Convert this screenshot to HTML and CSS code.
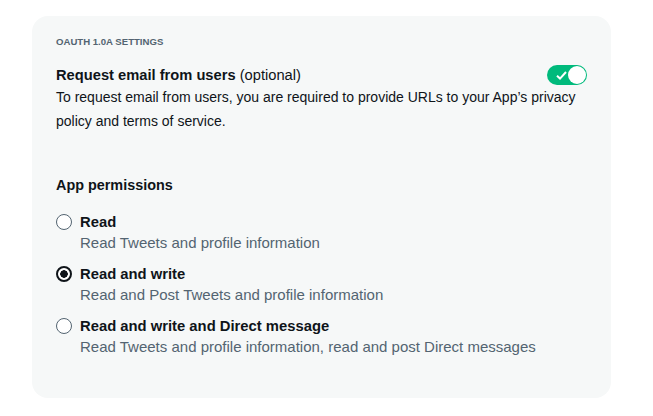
FILE: index.html
```html
<!DOCTYPE html>
<html lang="en">
<head>
<meta charset="UTF-8">
<title>App settings</title>
<link rel="stylesheet" href="styles.css">
</head>
<body>
<section class="card">
  <div class="eyebrow">OAuth 1.0a settings</div>

  <div class="setting">
    <div class="setting-row">
      <div class="setting-title"><b>Request email from users</b> (optional)</div>
      <span class="toggle">
        <svg class="check" width="11" height="9" viewBox="0 0 11 9"><path d="M1 4.8 L4 7.6 L10 1" fill="none" stroke="#fff" stroke-width="2"/></svg>
        <span class="knob"></span>
      </span>
    </div>
    <p class="setting-desc">To request email from users, you are required to provide URLs to your App’s privacy policy and terms of service.</p>
  </div>

  <h3 class="group-title">App permissions</h3>

  <div class="options">
    <label class="option">
      <span class="radio"></span>
      <span class="option-text">
        <span class="option-name">Read</span>
        <span class="option-desc">Read Tweets and profile information</span>
      </span>
    </label>
    <label class="option">
      <span class="radio checked"></span>
      <span class="option-text">
        <span class="option-name">Read and write</span>
        <span class="option-desc">Read and Post Tweets and profile information</span>
      </span>
    </label>
    <label class="option">
      <span class="radio"></span>
      <span class="option-text">
        <span class="option-name">Read and write and Direct message</span>
        <span class="option-desc">Read Tweets and profile information, read and post Direct messages</span>
      </span>
    </label>
  </div>
</section>
</body>
</html>
```

FILE: styles.css
```css
body {
margin: 0;
background: #fff;
font-family: "Liberation Sans", Arial, sans-serif;
color: #0f1419;
}

.card {
width: 579px;
height: 382px;
box-sizing: border-box;
margin: 16px 0 0 32px;
padding: 20px 24px 0 24px;
background: #f6f8f8;
border-radius: 16px;
}

.eyebrow {
font-size: 9.6px;
font-weight: bold;
text-transform: uppercase;
color: #536471;
line-height: 12px;
}

.setting {
margin-top: 17px;
}

.setting-row {
display: flex;
align-items: flex-start;
justify-content: space-between;
}

.setting-title {
font-size: 14.7px;
line-height: 20px;
}

.setting-desc {
margin: 0;
font-size: 14px;
line-height: 24px;
width: 525px;
}

/* toggle on */
.toggle {
display: flex;
align-items: center;
justify-content: space-between;
width: 40px;
height: 20px;
box-sizing: border-box;
padding: 0 1px 0 9px;
margin-top: 0;
background: #00ba7c;
border-radius: 10px;
}

.knob {
width: 18px;
height: 18px;
background: #fff;
border-radius: 50%;
}

.group-title {
margin: 42px 0 0;
font-size: 14.4px;
line-height: 20px;
font-weight: bold;
}

.options {
margin-top: 17px;
display: flex;
flex-direction: column;
gap: 11px;
}

.option {
display: flex;
align-items: flex-start;
gap: 8px;
}

.radio {
width: 16px;
height: 16px;
box-sizing: border-box;
margin-top: 2px;
border: 1.5px solid #536471;
border-radius: 50%;
background: #fff;
}

.radio.checked {
border: 2px solid #0f1419;
background: radial-gradient(circle, #0f1419 0 3.5px, #fff 4px);
}

.option-text {
display: flex;
flex-direction: column;
}

.option-name {
font-size: 14.8px;
font-weight: bold;
line-height: 20px;
}

.option-desc {
font-size: 15px;
line-height: 21px;
color: #536471;
}
```
